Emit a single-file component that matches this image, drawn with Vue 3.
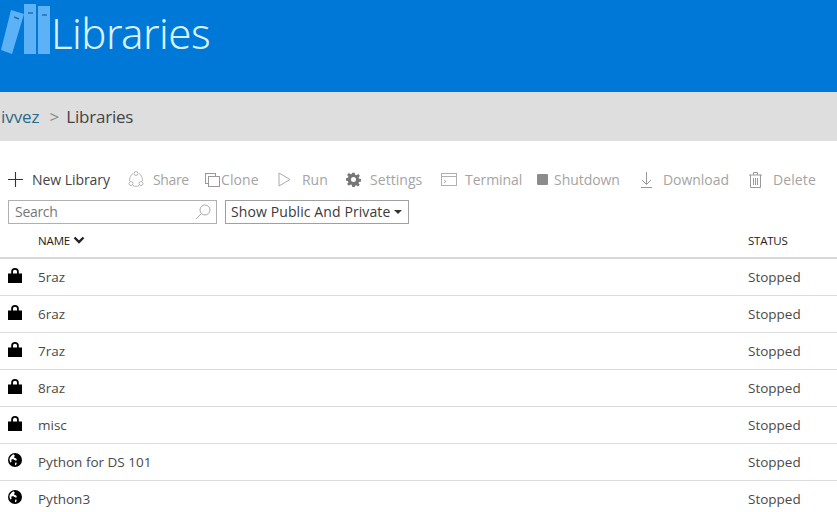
<script setup>
const rows = [
  { name: '5raz', icon: 'lock' },
  { name: '6raz', icon: 'lock' },
  { name: '7raz', icon: 'lock' },
  { name: '8raz', icon: 'lock' },
  { name: 'misc', icon: 'lock' },
  { name: 'Python for DS 101', icon: 'globe' },
  { name: 'Python3', icon: 'globe' },
]
</script>

<template>
  <div class="page">
    <header class="banner">
      <svg class="logo" width="51" height="56" viewBox="0 0 51 56">
        <path fill="#5db2f7" d="M11 10 L24 14 L12 54 L1 50 Z" />
        <rect x="24" y="4" width="12" height="50" fill="#5db2f7" />
        <rect x="38" y="6" width="12" height="48" fill="#5db2f7" />
        <path stroke="#1f6fb8" stroke-width="1.5" d="M14 17 L19 19 M28 13 H33 M42 15 H47" />
      </svg>
      <h1 class="title">Libraries</h1>
    </header>

    <nav class="crumbs">
      <span class="crumb-link">ivvez</span>
      <span class="crumb-sep">&gt;</span>
      <span class="crumb-here">Libraries</span>
    </nav>

    <div class="toolbar">
      <span class="tool tool-new">
        <svg width="15" height="15" viewBox="0 0 15 15"><path d="M7.5 0V15M0 7.5H15" stroke="#333" stroke-width="1.1" fill="none" /></svg>
        <span>New Library</span>
      </span>
      <span class="tool tool-share">
        <svg width="16" height="17" viewBox="0 0 16 17" fill="none" stroke="#b5b5b5"><path d="M5 2.500C2.500 4 1.500 7 1.500 10M11 2.500C13.500 4 14.500 7 14.500 10M5 14.500c2 1 4 1 6 0" /><circle cx="8" cy="2.500" r="2" /><circle cx="3" cy="12.500" r="2" /><circle cx="13" cy="12.500" r="2" /></svg>
        <span>Share</span>
      </span>
      <span class="tool tool-clone">
        <svg width="15" height="14" viewBox="0 0 15 14" fill="none" stroke="#999"><rect x="0.5" y="0.5" width="10" height="10" /><rect x="3.5" y="3.5" width="11" height="10" fill="#fff" /></svg>
        <span>Clone</span>
      </span>
      <span class="tool tool-run">
        <svg width="13" height="15" viewBox="0 0 13 15" fill="none" stroke="#aaa"><path d="M1 1 12 7.5 1 14Z" /></svg>
        <span>Run</span>
      </span>
      <span class="tool tool-settings">
        <svg width="15" height="15" viewBox="0 0 24 24"><path fill="#777" fill-rule="evenodd" d="M10 1h4l.6 3.2 2 .8L19.4 3l2.800 2.800-2 2.800.8 2 3 .6v4l-3.200.6-.8 2 2 2.600-2.800 2.800-2.800-2-2 .8L14 24h-4l-.6-3.200-2-.8-2.800 2L1.800 19.200l2-2.800-.8-2L0 13.800v-4l3-.6.8-2-2-2.800L4.600 1.600l2.800 2 2-.8ZM12 8a4 4 0 1 0 0 8 4 4 0 0 0 0-8Z" /></svg>
        <span>Settings</span>
      </span>
      <span class="tool tool-terminal">
        <svg width="16" height="13" viewBox="0 0 16 13" fill="none" stroke="#b0b0b0"><rect x="0.500" y="0.500" width="15" height="12" /><path d="M0.500 3.500h15M3 7l2 1.500L3 10" /></svg>
        <span>Terminal</span>
      </span>
      <span class="tool tool-shutdown">
        <span class="stop"></span>
        <span>Shutdown</span>
      </span>
      <span class="tool tool-download">
        <svg width="13" height="16" viewBox="0 0 13 16" fill="none" stroke="#999"><path d="M6.500 0V12M2 8l4.500 4.500L11 8M1 15.500h11" /></svg>
        <span>Download</span>
      </span>
      <span class="tool tool-delete">
        <svg width="13" height="16" viewBox="0 0 13 16" fill="none" stroke="#999"><path d="M0 3h13M4.500 3V.5h4V3M1.500 3v12.500h10V3M4.500 6v7M6.500 6v7M8.500 6v7" /></svg>
        <span>Delete</span>
      </span>
    </div>

    <div class="filters">
      <label class="search">
        <input class="search-input" placeholder="Search" />
        <svg width="16" height="16" viewBox="0 0 16 16" fill="none" stroke="#aaa"><circle cx="10" cy="6" r="5" /><path d="M6.500 9.500 1 15" /></svg>
      </label>
      <button class="select">Show Public And Private<span class="caret"></span></button>
    </div>

    <div class="row head">
      <span class="col-name">NAME
        <svg width="12" height="8" viewBox="0 0 12 8"><path d="M1.500 1.500 6 6l4.500-4.500" fill="none" stroke="#222" stroke-width="2.400" /></svg>
      </span>
      <span class="col-status">STATUS</span>
    </div>

    <div v-for="r in rows" :key="r.name" class="row item">
      <span class="col-icon">
        <svg v-if="r.icon === 'lock'" width="14" height="15" viewBox="0 0 14 15"><path fill="#000" d="M0 5.500h3.200V3.500a3.800 3.500 0 0 1 7.600 0v2H14V15H0Zm5-.1h4V3.500a2 1.800 0 0 0-4 0Z" /></svg>
        <svg v-else class="globe" width="14" height="14" viewBox="0 0 14 14"><circle cx="7" cy="7" r="7" fill="#000" /><path fill="#fff" d="M5.500 1.200C4 2 2.200 3.500 1.600 5.500c-.3 1.500.2 3 1 4.200l1-1.200L3.200 6.800l1.800-.8 2.200 1.600L9 7.200 8.200 5.400 6 4.600l.8-2ZM7.200 9.400l1.600.3-.8 2.600-1-.4Z" /></svg>
      </span>
      <span class="col-name">{{ r.name }}</span>
      <span class="col-status">Stopped</span>
    </div>
  </div>
</template>

<style>
html, body { margin: 0; background: #fff; overflow: hidden; }
</style>

<style scoped>
.page {
  width: 837px;
  height: 512px;
  overflow: hidden;
  font-family: "Open Sans", "Noto Sans", sans-serif;
  color: #4a4a4a;
}
.banner {
  height: 92px;
  background: #0078d7;
  display: flex;
  align-items: flex-start;
  box-sizing: border-box;
}
.logo { flex: none; }
.title {
  margin: 7px 0 0 0;
  font-family: "Noto Sans", sans-serif;
  font-weight: 300;
  font-size: 42px;
  line-height: 52px;
  color: #d8f1ff;
  letter-spacing: -0.55px;
}
.crumbs {
  height: 49px;
  background: #dedede;
  display: flex;
  align-items: center;
  font-size: 17px;
  letter-spacing: -0.05px;
}
.crumb-link { color: #2a6a86; margin-left: 1px; }
.crumb-sep { color: #888; margin: 0 7px 0 10px; }
.crumb-here { color: #444; letter-spacing: -0.2px; }
.toolbar {
  height: 59px;
  display: flex;
  align-items: flex-end;
  padding: 0 0 11px 8px;
  box-sizing: border-box;
  font-size: 14px;
  letter-spacing: -0.05px;
  color: #a4a4a4;
}
.tool { display: inline-flex; align-items: center; white-space: nowrap; }
.tool svg { flex: none; }
.tool-new { color: #444; gap: 9px; width: 120px; }
.tool-share { gap: 9px; width: 77px; letter-spacing: -0.35px; }
.tool-clone { gap: 1px; width: 73px; letter-spacing: 0.1px; }
.tool-run { gap: 11px; width: 68px; }
.tool-settings { gap: 9px; width: 95px; letter-spacing: 0.05px; }
.tool-terminal { gap: 8px; width: 96px; }
.tool-shutdown { gap: 6px; width: 103px; }
.tool-download { gap: 10px; width: 109px; }
.tool-delete { gap: 11px; letter-spacing: 0.1px; }
.stop { width: 11px; height: 11px; background: #8c8c8c; border-radius: 1px; }
.filters {
  display: flex;
  gap: 8px;
  padding-left: 8px;
  height: 24px;
}
.search {
  width: 209px;
  height: 24px;
  box-sizing: border-box;
  border: 1px solid #b0b0b0;
  display: flex;
  align-items: center;
  padding: 0 5px 0 6px;
}
.search-input {
  flex: 1;
  min-width: 0;
  height: 20px;
  line-height: 18px;
  margin-top: -2px;
  border: 0;
  outline: 0;
  padding: 0;
  background: transparent;
  font: inherit;
  font-size: 14px;
  letter-spacing: -0.3px;
}
.search-input::placeholder { color: #777; opacity: 1; }
.select {
  width: 184px;
  height: 24px;
  box-sizing: border-box;
  border: 1px solid #a0a0a0;
  background: #fff;
  padding: 0 0 2px 5px;
  font: inherit;
  font-size: 14px;
  letter-spacing: 0.1px;
  color: #3a3a3a;
  display: flex;
  align-items: center;
  white-space: nowrap;
}
.caret {
  margin: 2px 0 0 4px;
  border-left: 4px solid transparent;
  border-right: 4px solid transparent;
  border-top: 4px solid #333;
}
.row {
  display: flex;
  align-items: center;
  box-sizing: border-box;
  font-size: 13.5px;
}
.head {
  height: 36px;
  margin-top: -1px;
  border-bottom: 2px solid #d8d8d8;
  font-size: 11.5px;
  color: #222;
  padding-left: 38px;
  letter-spacing: -0.15px;
}
.head .col-name { flex: 1; display: flex; align-items: center; gap: 3px; }
.head .col-status { letter-spacing: -0.25px; }
.item { height: 37px; border-bottom: 1px solid #dcdcdc; }
.col-icon { width: 38px; padding-left: 8px; box-sizing: border-box; display: flex; align-items: center; margin-top: -4px; }
.item .col-name { flex: 1; }
.col-status { width: 89px; }
</style>
